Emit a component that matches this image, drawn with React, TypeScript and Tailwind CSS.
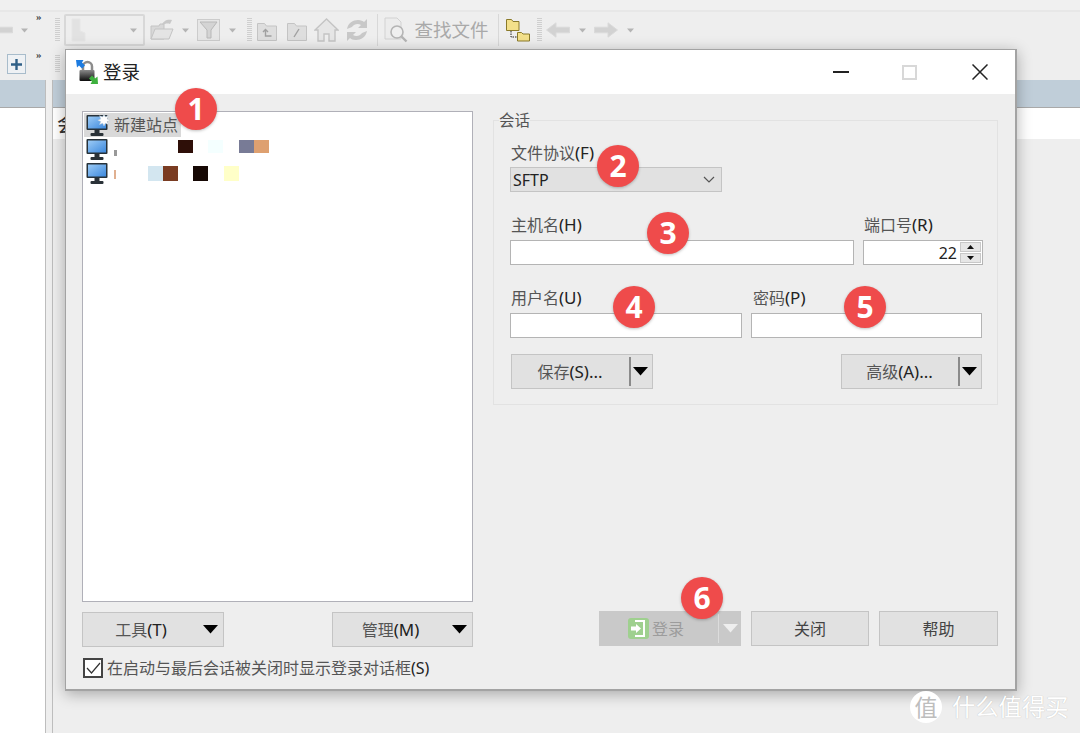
import React from "react";

const font = "font-['Noto_Sans','Noto_Sans_CJK_SC',sans-serif]";

function Grip({ h = "h-[24px]" }: { h?: string }) {
  return <div className={`w-[5px] ${h} bg-[repeating-linear-gradient(to_bottom,#cfcfcf_0,#cfcfcf_1px,#eeeeee_1px,#eeeeee_2px)]`} />;
}
function Caret({ color = "#b4b4b4" }: { color?: string }) {
  return (
    <svg width="7" height="5" viewBox="0 0 7 5"><path d="M0 0.5h7L3.5 4.5z" fill={color} /></svg>
  );
}
function More() {
  return <div className="self-start text-[11px] leading-[10px] font-bold text-[#444] font-['Liberation_Serif',serif]">»</div>;
}
function Tri({ color = "#000", w = 15 }: { color?: string; w?: number }) {
  return (
    <svg width={w} height="9" viewBox="0 0 15 9"><path d="M0 0h15L7.5 8.5z" fill={color} /></svg>
  );
}
function ArrowIcon({ flip = false }: { flip?: boolean }) {
  return (
    <svg width="24" height="16" viewBox="0 0 24 16" className={flip ? "-scale-x-100" : ""}>
      <path d="M0.5 8L10 0.8v4.4h13.5v5.6H10v4.4z" fill="#d2d2d2" stroke="#dadada" />
    </svg>
  );
}
function Folder({ mark }: { mark: string }) {
  return (
    <svg width="20" height="21" viewBox="0 0 20 21">
      <path d="M0.5 3.5h7l2 2.500h10v14.500H0.5z" fill="#dedede" stroke="#c4c4c4" />
      <path d={mark} fill="none" stroke="#a0a0a0" strokeWidth="1.4" />
    </svg>
  );
}
function Monitor({ star = false }: { star?: boolean }) {
  const id = star ? "mon1" : "mon2";
  return (
    <svg width="24" height="23" viewBox="0 0 24 23" className="shrink-0">
      <defs>
        <linearGradient id={id} x1="0" y1="0" x2="1" y2="1">
          <stop offset="0" stopColor="#9ccbf6" />
          <stop offset="1" stopColor="#3c88dc" />
        </linearGradient>
      </defs>
      <rect x="0.5" y="1" width="21" height="15" rx="1" fill="#27323a" />
      <rect x="2" y="2.5" width="18" height="12" fill={`url(#${id})`} />
      <rect x="8.5" y="16" width="5" height="3" fill="#2a3238" />
      <rect x="4.5" y="19" width="13" height="3" rx="1" fill="#2a3238" />
      {star && <path d="M18 0l1.3 3 3.2-1.3-1.3 3.2 3 1.3-3 1.3 1.3 3-3.2-1.3L18 12l-1.3-2.8-3.2 1.3 1.3-3-3-1.3 3-1.3-1.3-3.2 3.2 1.3z" fill="#fff" stroke="#b9c8d6" strokeWidth="0.5" />}
    </svg>
  );
}
function Badge({ n, pos }: { n: number; pos: string }) {
  return (
    <div className={`absolute ${pos} w-[42px] h-[42px] rounded-full bg-[#ef4b4b] shadow-[0_1px_3px_rgba(0,0,0,0.25)] flex items-center justify-center text-white text-[30px] font-bold font-['Open_Sans',sans-serif] leading-none`}>
      {n}
    </div>
  );
}
function Label({ cjk, key2, cls = "" }: { cjk: string; key2: string; cls?: string }) {
  return (
    <div className={`text-[16px] leading-[20px] text-[#333] ${cls}`}>
      <span className="text-[#555]">{cjk}</span>
      <span className="text-[#222] text-[17px]">{key2}</span>
    </div>
  );
}
const inputCls = "h-[25px] bg-white border border-[#b4b4b4]";
const btnCls = "h-[35px] bg-[#e1e1e1] border border-[#c4c4c4] flex items-center text-[16px] text-[#444]";

function MenuButton({ label, w, split }: { label: React.ReactNode; w: string; split?: boolean }) {
  return (
    <div className={`${btnCls} ${w} relative`}>
      <div className="flex-1 text-center pl-[1px] pr-[2px]">{label}</div>
      <div className={`w-[23px] h-[29px] flex items-center justify-center pr-[2px] ${split ? "border-l-2 border-[#8a8a8a]" : ""}`}>
        <Tri />
      </div>
    </div>
  );
}

export default function App() {
  return (
    <div className={`relative w-[1080px] h-[733px] overflow-hidden bg-[#eeeeee] ${font}`}>
      {/* background application */}
      <div className="h-[12px] bg-[#f0f0f0] border-b-2 border-[#e7e7e7]" />
      <div className="h-[36px] flex items-center">
        <div className="w-[13px] h-[16px] overflow-hidden flex justify-start"><div className="shrink-0 -ml-[11px]"><ArrowIcon /></div></div>
        <div className="ml-[8px]"><Caret /></div>
        <div className="ml-[8px] self-start -mt-[1px]"><More /></div>
        <div className="ml-[13px]"><Grip /></div>
        <div className="ml-[4px] w-[81px] h-[32px] border-2 border-[#d8d8d8] rounded-[2px] flex items-center pl-[5px] pr-[6px] justify-between">
          <svg width="16" height="24" viewBox="0 0 16 24"><path d="M1 1h8v12l5 2v8H1z" fill="#e2e2e2" stroke="#e6e6e6" /></svg>
          <Caret />
        </div>
        <div className="ml-[5px]">
          <svg width="24" height="24" viewBox="0 0 24 24">
            <path d="M1 8h8l1-2h4v15H1z" fill="#d8d8d8" stroke="#c4c4c4" />
            <path d="M1 21l4-10h18l-4 10z" fill="#e4e4e4" stroke="#c4c4c4" />
            <path d="M12 7c1-4 5-6 10-5l-2 4c-3-1-5 0-8 1z" fill="#c8c8c8" />
          </svg>
        </div>
        <div className="ml-[8px]"><Caret /></div>
        <div className="ml-[8px]">
          <svg width="23" height="22" viewBox="0 0 23 22">
            <rect x="0.5" y="0.5" width="22" height="21" fill="#e6e6e6" stroke="#cccccc" />
            <path d="M3 3h17l-6 8v8h-4v-8z" fill="#d4d4d4" stroke="#b8b8b8" />
          </svg>
        </div>
        <div className="ml-[9px]"><Caret /></div>
        <div className="ml-[11px]"><Grip /></div>
        <div className="ml-[5px]"><Folder mark="M6 12l2.5-2.5L11 12M8.5 10v6h6" /></div>
        <div className="ml-[10px]"><Folder mark="M7 17l5-8" /></div>
        <div className="ml-[7px]">
          <svg width="25" height="24" viewBox="0 0 25 24">
            <path d="M12.5 1L1 12h3v11h6v-7h5v7h6V12h3z" fill="#e6e6e6" stroke="#c4c4c4" strokeWidth="1.4" />
          </svg>
        </div>
        <div className="ml-[6px]">
          <svg width="24" height="24" viewBox="0 0 24 24">
            <path d="M2 11C3 5 8 2 13 2c3 0 5 1 6 2l3-3v9h-9l3-3c-3-2-7-1-9 2z" fill="#c8c8c8" />
            <path d="M22 13c-1 6-6 9-11 9-3 0-5-1-6-2l-3 3v-9h9l-3 3c3 2 7 1 9-2z" fill="#c8c8c8" />
          </svg>
        </div>
        <div className="ml-[8px] w-px h-[32px] bg-[#d8d8d8]" />
        <div className="ml-[6px]">
          <svg width="24" height="26" viewBox="0 0 24 26">
            <path d="M1 1h12l4 4v17H1z" fill="#ececec" stroke="#d2d2d2" />
            <circle cx="13" cy="15" r="6" fill="#efefef" stroke="#b4b4b4" strokeWidth="1.6" />
            <path d="M17.5 19.5l5 5" stroke="#b4b4b4" strokeWidth="2.4" />
          </svg>
        </div>
        <div className="ml-[7px] text-[18.5px] leading-[24px] text-[#a9a9a9] whitespace-nowrap">查找文件</div>
        <div className="ml-[9px] w-px h-[32px] bg-[#d8d8d8]" />
        <div className="ml-[7px]">
          <svg width="24" height="24" viewBox="0 0 24 24">
            <path d="M0.5 1.5h5l1.5 2h6v9H0.5z" fill="#f3e08a" stroke="#8a7a2a" />
            <path d="M11.5 14.5h4l1.5 1.500h6.500v7h-12z" fill="#f3e08a" stroke="#8a7a2a" />
            <path d="M5 13v6h6" fill="none" stroke="#222" strokeDasharray="1.5 1" />
          </svg>
        </div>
        <div className="ml-[7px]"><Grip /></div>
        <div className="ml-[4px]"><ArrowIcon /></div>
        <div className="ml-[9px]"><Caret /></div>
        <div className="ml-[8px]"><ArrowIcon flip /></div>
        <div className="ml-[9px]"><Caret /></div>
      </div>
      <div className="h-[32px] flex items-center">
        <div className="ml-[7px] w-[19px] h-[20px] border border-[#a8bccb] bg-[#eef1f4] flex items-center justify-center">
          <svg width="13" height="13" viewBox="0 0 13 13"><path d="M6.5 1v11M1 6.5h11" stroke="#2f5f86" strokeWidth="2.4" /></svg>
        </div>
        <div className="ml-[10px] self-start mt-[1px]"><More /></div>
        <div className="ml-[13px]"><Grip h="h-[18px]" /></div>
      </div>
      <div className="flex h-[653px]">
        <div className="w-[46px] flex flex-col border-r border-[#bdbdbd]">
          <div className="h-[28px] bg-[#c0ced9] border-b border-[#a9a9a9]" />
          <div className="flex-1 bg-white" />
        </div>
        <div className="w-[6px]" />
        <div className="flex-1 flex flex-col border-l border-[#bdbdbd]">
          <div className="h-[28px] bg-[#c0ced9] border-b border-[#a9a9a9]" />
          <div className="h-[31px] bg-white pl-[4px] text-[20px] leading-[34px] text-[#333]">会话</div>
        </div>
      </div>

      {/* login dialog */}
      <div className="absolute left-[65px] top-[49px] w-[952px] h-[642px] bg-[#eeeeee] border border-[#a3a3a3] border-b-2 border-r-2 shadow-[0_3px_14px_rgba(0,0,0,0.3)] flex flex-col">
        <div className="h-[44px] bg-white flex items-center shrink-0">
          <svg width="22" height="24" viewBox="0 0 22 24" className="ml-[10px]">
            <defs>
              <linearGradient id="lk" x1="0" y1="0" x2="0" y2="1">
                <stop offset="0" stopColor="#8a8a8a" />
                <stop offset="1" stopColor="#0c0c0c" />
              </linearGradient>
            </defs>
            <path d="M7 11V6.5a4.5 4.5 0 0 1 9 0V11" fill="none" stroke="#8c8c8c" strokeWidth="2.5" />
            <rect x="3.5" y="10" width="15" height="11" rx="1" fill="url(#lk)" />
            <path d="M0 0h7.500L6 2.500 9 5.500 6 8.500 3 5.500 1 7.500z" fill="#1c7be0" />
            <path d="M22 24h-7.500l1.500-2.500-3-3 3-3 3 3 2.500-2z" fill="#3fb13f" />
          </svg>
          <div className="ml-[5px] text-[18.5px] leading-[24px] text-[#222]">登录</div>
          <div className="ml-auto flex items-center">
            <div className="w-[16px] h-[2px] bg-[#222] mr-[53px]" />
            <div className="w-[15px] h-[15px] border-2 border-[#d8d8d8] mr-[55px]" />
            <svg width="16" height="16" viewBox="0 0 16 16" className="mr-[27px]"><path d="M0.5 0.5l15 15M15.5 0.5l-15 15" stroke="#222" strokeWidth="1.5" /></svg>
          </div>
        </div>
        <div className="flex-1 flex pl-[16px]">
          {/* left column */}
          <div className="w-[391px] flex flex-col pt-[17px]">
            <div className="h-[491px] bg-white border border-[#b0b0b8] p-[1px] text-[16px] text-[#555]">
              <div className="h-[24px] w-[97px] bg-[#d9d9d9] flex items-center pl-[2px]">
                <Monitor star />
                <span className="ml-[4px] whitespace-nowrap">新建站点</span>
              </div>
              <div className="h-[24px] flex items-center pl-[2px]">
                <Monitor />
                <div className="ml-[4px] w-[3px] h-[6px] mt-[8px] bg-[#999999]" />
                <div className="ml-[61px] w-[15px] h-[13px] -mt-[5px] bg-[#2e0f08]" />
                <div className="ml-[15px] w-[15px] h-[13px] -mt-[5px] bg-[#f4ffff]" />
                <div className="ml-[16px] w-[15px] h-[13px] -mt-[5px] bg-[#787b96]" />
                <div className="w-[15px] h-[13px] -mt-[5px] bg-[#dea070]" />
              </div>
              <div className="h-[24px] flex items-center pl-[2px]">
                <Monitor />
                <div className="ml-[4px] w-[2px] h-[9px] mt-[3px] bg-[#e0b090]" />
                <div className="ml-[32px] w-[15px] h-[15px] bg-[#d3e6f0]" />
                <div className="w-[15px] h-[15px] bg-[#7a3c22]" />
                <div className="ml-[15px] w-[15px] h-[15px] bg-[#160804]" />
                <div className="ml-[16px] w-[15px] h-[15px] bg-[#ffffc8]" />
              </div>
            </div>
            <div className="mt-[10px] flex justify-between">
              <MenuButton w="w-[142px]" label={<><span className="text-[#555]">工具</span><span className="text-[#222] text-[17px]">(T)</span></>} />
              <MenuButton w="w-[141px]" label={<><span className="text-[#555]">管理</span><span className="text-[#222] text-[17px]">(M)</span></>} />
            </div>
            <div className="mt-[11px] ml-[1px] flex items-center h-[20px]">
              <div className="w-[20px] h-[20px] border-2 border-[#444] bg-white flex items-center justify-center">
                <svg width="15" height="12" viewBox="0 0 15 12"><path d="M1 6l4.5 5L14 1" fill="none" stroke="#333" strokeWidth="1.2" /></svg>
              </div>
              <div className="ml-[4px] text-[16px] leading-[20px] whitespace-nowrap">
                <span className="text-[#555]">在启动与最后会话被关闭时显示登录对话框</span><span className="text-[#222]">(S)</span>
              </div>
            </div>
          </div>
          {/* right column */}
          <div className="ml-[20px] w-[505px] flex flex-col pt-[26px] pb-[43px]">
            <div className="h-[285px] border border-[#e2e2e2] pl-[16px] pr-[15px] relative">
              <div className="absolute left-[5px] -top-[10px] bg-[#eeeeee] text-[15.5px] leading-[18px] text-[#555]">会话</div>
              <Label cjk="文件协议" key2="(F)" cls="mt-[22px] ml-[1px]" />
              <div className="mt-[4px] w-[212px] h-[25px] bg-[#e1e1e1] border border-[#c4c4c4] flex items-center justify-between pl-[2px] pr-[6px] text-[16px] text-[#222]">
                SFTP
                <svg width="12" height="7" viewBox="0 0 12 7"><path d="M1 1l5 5 5-5" fill="none" stroke="#555" strokeWidth="1.2" /></svg>
              </div>
              <div className="mt-[23px] flex gap-[9px]">
                <div className="w-[344px] shrink-0">
                  <Label cjk="主机名" key2="(H)" cls="ml-[1px]" />
                  <div className={`mt-[5px] ${inputCls}`} />
                </div>
                <div className="w-[120px] shrink-0">
                  <Label cjk="端口号" key2="(R)" cls="ml-[1px]" />
                  <div className={`mt-[5px] ${inputCls} flex items-center justify-end pr-[1px]`}>
                    <span className="text-[16px] text-[#222] mr-[3px]">22</span>
                    <div className="w-[21px] h-[21px] flex flex-col gap-[1px]">
                      <div className="flex-1 bg-[#e6e6e6] border border-[#c8c8c8] flex items-center justify-center"><svg width="7" height="4" viewBox="0 0 7 4"><path d="M0 4h7L3.5 0z" fill="#111" /></svg></div>
                      <div className="flex-1 bg-[#e6e6e6] border border-[#c8c8c8] flex items-center justify-center"><svg width="7" height="4" viewBox="0 0 7 4"><path d="M0 0h7L3.5 4z" fill="#111" /></svg></div>
                    </div>
                  </div>
                </div>
              </div>
              <div className="mt-[23px] flex gap-[9px]">
                <div className="w-[232px]">
                  <Label cjk="用户名" key2="(U)" cls="ml-[1px]" />
                  <div className={`mt-[5px] ${inputCls}`} />
                </div>
                <div className="w-[231px]">
                  <Label cjk="密码" key2="(P)" cls="ml-[2px]" />
                  <div className={`mt-[5px] ${inputCls}`} />
                </div>
              </div>
              <div className="mt-[16px] ml-[1px] flex justify-between">
                <MenuButton split w="w-[142px]" label={<><span className="text-[#555]">保存</span><span className="text-[#222] text-[17px]">(S)...</span></>} />
                <MenuButton split w="w-[141px]" label={<><span className="text-[#555]">高级</span><span className="text-[#222] text-[17px]">(A)...</span></>} />
              </div>
            </div>
            <div className="mt-auto flex justify-end gap-[10px]">
              <div className="w-[142px] h-[35px] bg-[#c9c9c9] flex items-center">
                <div className="flex-1 flex items-center justify-center text-[16px] text-[#9c9c9c] pr-[5px]">
                  <svg width="21" height="21" viewBox="0 0 21 21">
                    <rect width="21" height="21" rx="3" fill="#9fd08f" />
                    <path d="M7 3h9v15H7" fill="none" stroke="#fff" strokeWidth="2" />
                    <path d="M3 8.5h5V6l5 4.5L8 15v-2.5H3z" fill="#fff" />
                  </svg>
                  <span className="ml-[3px]">登录</span>
                </div>
                <div className="w-[23px] h-[29px] border-l border-[#dcdcdc] flex items-center justify-center">
                  <Tri color="#eeeeee" />
                </div>
              </div>
              <div className={`${btnCls} w-[118px] justify-center`}>关闭</div>
              <div className={`${btnCls} w-[119px] justify-center`}>帮助</div>
            </div>
          </div>
        </div>
      </div>

      <Badge n={1} pos="left-[175px] top-[88px]" />
      <Badge n={2} pos="left-[597px] top-[145px]" />
      <Badge n={3} pos="left-[647px] top-[212px]" />
      <Badge n={4} pos="left-[613px] top-[286px]" />
      <Badge n={5} pos="left-[844px] top-[286px]" />
      <Badge n={6} pos="left-[681px] top-[577px]" />

      {/* watermark */}
      <div className="absolute left-[910px] top-[691px] flex items-center">
        <div className="w-[32px] h-[32px] rounded-full bg-white flex items-center justify-center text-[23px] text-[#bdbdbd] leading-none">值</div>
        <div className="ml-[10px] text-[23.3px] leading-[30px] text-white whitespace-nowrap [text-shadow:0_0_1px_rgba(0,0,0,0.25)]">什么值得买</div>
      </div>
    </div>
  );
}
